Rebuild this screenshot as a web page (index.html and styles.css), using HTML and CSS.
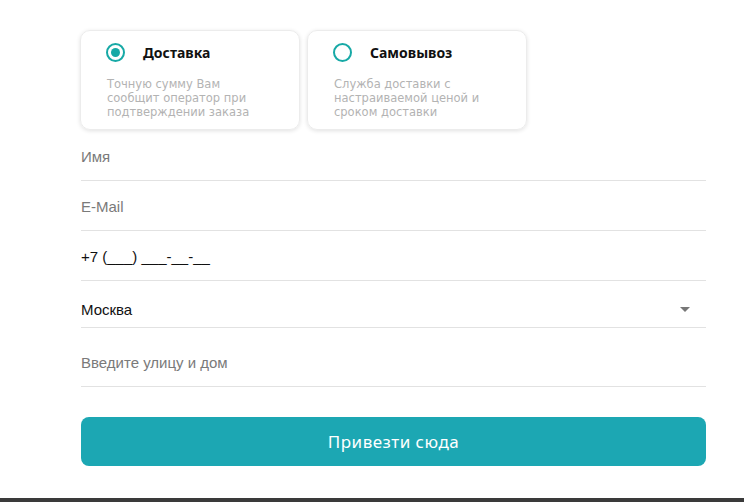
FILE: index.html
```html
<!DOCTYPE html>
<html lang="ru">
<head>
<meta charset="utf-8">
<link rel="stylesheet" href="styles.css">
</head>
<body>
<div class="page">
  <div class="options">
    <div class="card">
      <div class="card-head">
        <span class="radio checked"></span>
        <span class="card-title">Доставка</span>
      </div>
      <p class="card-desc">Точную сумму Вам<br>сообщит оператор при<br>подтверждении заказа</p>
    </div>
    <div class="card">
      <div class="card-head">
        <span class="radio"></span>
        <span class="card-title">Самовывоз</span>
      </div>
      <p class="card-desc">Служба доставки с<br>настраиваемой ценой и<br>сроком доставки</p>
    </div>
  </div>
  <div class="form">
    <div class="field f50"><span class="ph">Имя</span></div>
    <div class="field f50"><span class="ph">E-Mail</span></div>
    <div class="field f50"><span class="val">+7 (___) ___-__-__</span></div>
    <div class="field f47 select"><span class="val">Москва</span><span class="arrow"></span></div>
    <div class="field f59"><span class="ph">Введите улицу и дом</span></div>
    <button class="submit">Привезти сюда</button>
  </div>
</div>
<div class="footer-bar"></div>
</body>
</html>
```

FILE: styles.css
```css
html, body {
  margin: 0;
  padding: 0;
  background: #fff;
}
body {
  width: 744px;
  height: 502px;
  overflow: hidden;
  display: flex;
  flex-direction: column;
}
.page {
  padding: 30px 38px 0 80px;
  flex: 1;
}
.options {
  display: flex;
  gap: 7px;
}
.card {
  box-sizing: border-box;
  width: 220px;
  height: 100px;
  border-radius: 10px;
  border: 1px solid #ececec;
  box-shadow: 0 1px 4px rgba(0,0,0,0.12);
  padding: 11px 10px 0 25px;
  font-family: "Noto Sans", "Liberation Sans", sans-serif;
}
.card-head {
  display: flex;
  align-items: center;
  height: 20px;
}
.radio {
  box-sizing: border-box;
  width: 19px;
  height: 19px;
  border: 2px solid #17a9a6;
  border-radius: 50%;
  display: flex;
  align-items: center;
  justify-content: center;
}
.radio.checked::after {
  content: "";
  width: 9px;
  height: 9px;
  border-radius: 50%;
  background: #17a9a6;
}
.card-title {
  margin-left: 18px;
  font-size: 14px;
  font-weight: 700;
  color: #111;
}
.card-desc {
  margin: 15px 0 0 1px;
  font-family: "DejaVu Sans", "Liberation Sans", sans-serif;
  font-size: 11.5px;
  line-height: 14px;
  color: #b3b3b3;
  white-space: nowrap;
}
.form {
  display: flex;
  flex-direction: column;
  margin-top: 1px;
  padding-left: 1px;
  font-family: "Liberation Sans", Arial, sans-serif;
  font-size: 15px;
}
.field {
  box-sizing: border-box;
  border-bottom: 1px solid #e2e2e2;
  display: flex;
  align-items: center;
}
.f50 { height: 50px; padding-top: 1px; }
.f47 { height: 47px; padding-top: 11px; }
.f59 { height: 59px; padding-top: 11px; }
.ph { color: #7a7a7a; }
.val { color: #111; }
.select { justify-content: space-between; padding-right: 16px; }
.arrow {
  width: 0;
  height: 0;
  border-left: 5px solid transparent;
  border-right: 5px solid transparent;
  border-top: 5px solid #777;
}
.submit {
  margin-top: 30px;
  height: 49px;
  border: none;
  border-radius: 8px;
  background: #1ca7b3;
  color: #fff;
  font-family: "Noto Sans", "Liberation Sans", sans-serif;
  font-size: 17px;
  letter-spacing: 0.5px;
  padding: 0;
}
.footer-bar {
  height: 4px;
  background: #3a3a3a;
}
```
